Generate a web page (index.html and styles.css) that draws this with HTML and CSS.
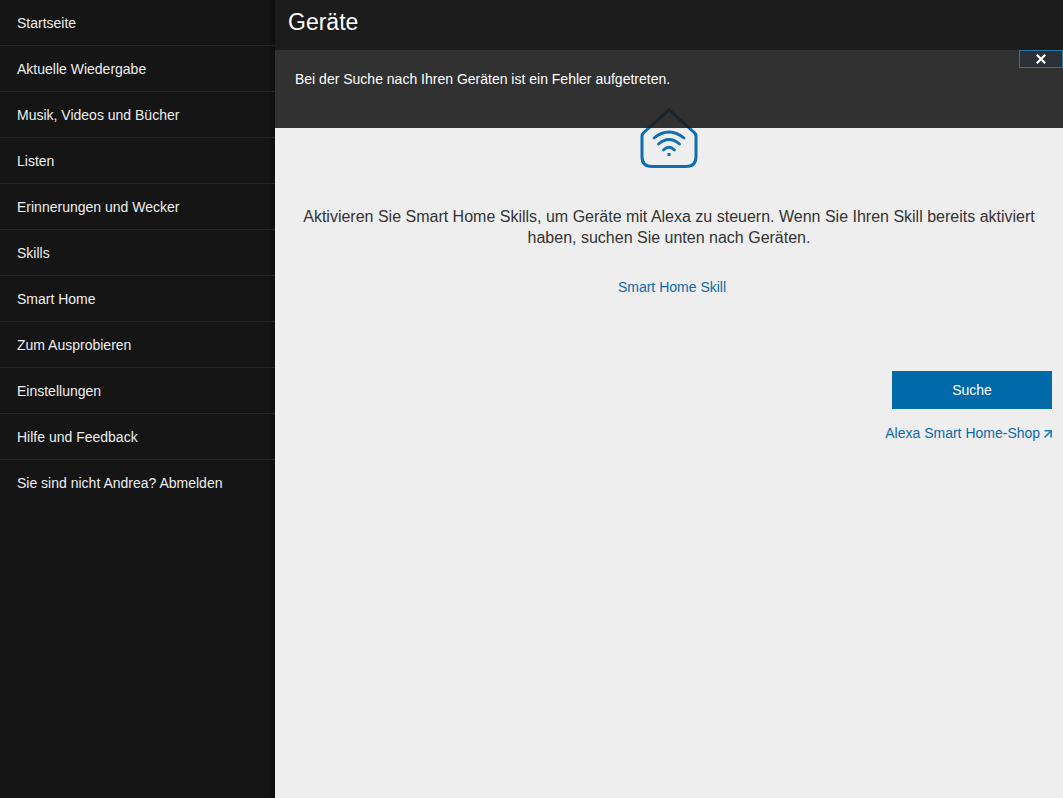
FILE: index.html
```html
<!DOCTYPE html>
<html lang="de">
<head>
<meta charset="utf-8">
<meta name="viewport" content="width=device-width, initial-scale=1">
<title>Geräte</title>
<link rel="stylesheet" href="styles.css">
</head>
<body>
<div class="app">
  <nav class="sidebar" aria-label="Hauptmenü">
    <ul class="menu">
      <li class="menu-item"><a href="#">Startseite</a></li>
      <li class="menu-item"><a href="#">Aktuelle Wiedergabe</a></li>
      <li class="menu-item"><a href="#">Musik, Videos und Bücher</a></li>
      <li class="menu-item"><a href="#">Listen</a></li>
      <li class="menu-item"><a href="#">Erinnerungen und Wecker</a></li>
      <li class="menu-item"><a href="#">Skills</a></li>
      <li class="menu-item"><a href="#">Smart Home</a></li>
      <li class="menu-item"><a href="#">Zum Ausprobieren</a></li>
      <li class="menu-item"><a href="#">Einstellungen</a></li>
      <li class="menu-item"><a href="#">Hilfe und Feedback</a></li>
      <li class="menu-item"><a href="#">Sie sind nicht Andrea? Abmelden</a></li>
    </ul>
  </nav>
  <main class="main">
    <header class="header"><h1 class="title">Geräte</h1></header>
    <div class="body">
      <div class="banner" role="alert">
        <p class="banner-text">Bei der Suche nach Ihren Geräten ist ein Fehler aufgetreten.</p>
        <button class="close" type="button" aria-label="Schließen">
          <svg width="10" height="10" viewBox="0 0 10 10" fill="none" stroke="#fff" stroke-width="2.2"><path d="M.8.8 9.2 9.2M9.2.8.8 9.2"/></svg>
        </button>
      </div>
      <section class="content">
        <svg class="house" width="58" height="60" viewBox="0 0 58 60" fill="none" stroke="#0d6eb2" stroke-width="3" stroke-linecap="round" stroke-linejoin="round">
          <path d="M29 1.8 3.8 24.5Q2 26 2 28.5V48.5Q2 58.5 12 58.5H46Q56 58.5 56 48.5V28.5Q56 26 54.2 24.5Z"/>
          <path d="M14 30Q29 18 44 30M18.5 36Q29 27 39.5 36M23.5 42Q29 36.500 34.500 42" stroke-width="2.8"/>
          <path d="M27.5 45h3v3h-3z" fill="#0d6eb2" stroke="none"/>
        </svg>
        <p class="intro">Aktivieren Sie Smart Home Skills, um Geräte mit Alexa zu steuern. Wenn Sie Ihren Skill bereits aktiviert haben, suchen Sie unten nach Geräten.</p>
        <a class="link skill-link" href="#">Smart Home Skill</a>
        <div class="actions">
          <button class="search" type="button">Suche</button>
          <a class="link shop-link" href="#">Alexa Smart Home-Shop
            <svg width="8" height="8" viewBox="0 0 8 8" fill="none" stroke="#1f7dbb" stroke-width="1.6"><path d="M.5.8H7.2V7.5M7 1 .6 7.4"/></svg>
          </a>
        </div>
      </section>
    </div>
  </main>
</div>
</body>
</html>
```
FILE: styles.css
```css
* { box-sizing: border-box; }
body {
  margin: 0;
  font: 14px/20px "Liberation Sans", Arial, sans-serif;
  background: #eee;
}
a { text-decoration: none; }
.app { display: flex; min-height: 100vh; }
.sidebar {
  flex: 0 0 275px;
  background: linear-gradient(to left, #0e0e0e, #151515 6px);
}
.menu { margin: 0; padding: 0; list-style: none; }
.menu-item { border-bottom: 1px solid #252525; }
.menu-item:last-child { border-bottom: 0; }
.menu-item a {
  display: block;
  padding: 13px 17px 12px;
  color: #eee;
}
.main {
  flex: 1;
  min-width: 0;
  display: flex;
  flex-direction: column;
}
.header { padding: 8px 13px 14px; background: #1c1c1c; }
.title {
  margin: 0;
  font-size: 23px;
  line-height: 28px;
  font-weight: 400;
  color: #fff;
}
.body { position: relative; flex: 1; }
.banner {
  position: absolute;
  top: 0;
  left: 0;
  right: 0;
  display: flex;
  justify-content: space-between;
  align-items: flex-start;
  background: rgba(28, 28, 28, .9);
}
.banner-text { margin: 0; padding: 19px 20px 39px; color: #fff; }
.close {
  flex: 0 0 44px;
  height: 18px;
  display: flex;
  align-items: center;
  justify-content: center;
  padding: 0;
  background: #2b3136;
  border: 1px solid #2478a8;
}
.content {
  display: flex;
  flex-direction: column;
  align-items: center;
  padding: 58px 11px 20px;
}
.house { display: block; }
.intro {
  margin: 38px 0 0;
  font-size: 16px;
  line-height: 21px;
  text-align: center;
  color: #333;
}
.link { color: #0d6aa8; }
.skill-link { margin-top: 29px; padding-left: 6px; }
.actions {
  align-self: stretch;
  display: flex;
  flex-direction: column;
  align-items: flex-end;
  gap: 14px;
  margin-top: 74px;
}
.search {
  width: 160px;
  height: 38px;
  border: 0;
  background: #0069a8;
  color: #fff;
  font: inherit;
}
```
